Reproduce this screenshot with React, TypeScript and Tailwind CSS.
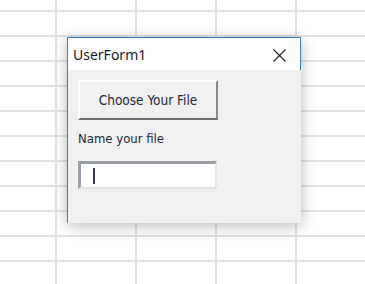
export default function App() {
  const cols = [57, 80, 80, 80, 80];
  const rows = [12, 25, 25, 25, 25, 25, 25, 25, 25, 25, 25, 25];

  return (
    <div className="relative w-[365px] h-[284px] overflow-hidden bg-white">
      {/* Spreadsheet grid */}
      <div className="flex flex-col">
        {rows.map((h, r) => (
          <div key={r} className="flex" style={{ height: h }}>
            {cols.map((w, c) => (
              <div
                key={c}
                className="shrink-0 border-r-2 border-b-2 border-[#e2e2e2]"
                style={{ width: w }}
              />
            ))}
          </div>
        ))}
      </div>

      {/* UserForm dialog */}
      <div
        className="absolute left-[67px] top-[37px] w-[234px] h-[186px] flex flex-col bg-[#f0f0f0] shadow-[0_3px_14px_rgba(0,0,0,0.28)]"
        style={{ fontFamily: '"DejaVu Sans Condensed", "DejaVu Sans", sans-serif' }}
      >
        {/* Title bar */}
        <div className="h-[33px] flex items-center justify-between bg-white border-t border-l border-r border-[#3c80c4] pl-[5px] pr-[14px]">
          <span
            className="text-[14px] text-[#1a1a1a] leading-none pt-[2px]"
            style={{ fontFamily: '"Noto Sans", "Open Sans", sans-serif' }}
          >
            UserForm1
          </span>
          <svg width="13" height="13" viewBox="0 0 13 13" className="mt-[2px]">
            <path d="M0.5 0.5L12.5 12.5M12.5 0.5L0.5 12.5" stroke="#222" strokeWidth="1.1" />
          </svg>
        </div>

        {/* Body */}
        <div className="flex-1 flex flex-col border-l border-[#3c80c4] pl-[10px] pt-[10px]">
          <button className="w-[140px] h-[40px] flex items-center justify-center bg-[#f0f0f0] border-t-2 border-l-2 border-t-white border-l-white border-b-2 border-r-2 border-b-[#6b6b6b] border-r-[#8a8a8a] text-[13.5px] text-[#1e2a3a]">
            Choose Your File
          </button>
          <div className="mt-[10px] h-[18px] text-[13px] text-[#1e2a3a] leading-[18px]">
            Name your file
          </div>
          <div className="mt-[13px] w-[139px] h-[28px] flex items-center bg-white border-t-[3px] border-l-[3px] border-t-[#9aa0a6] border-l-[#9aa0a6] border-b-2 border-r-2 border-b-[#e4e4e4] border-r-[#e4e4e4] pl-[12px]">
            <div className="w-[2px] h-[16px] bg-[#3a3a4a]" />
          </div>
        </div>
      </div>
    </div>
  );
}
